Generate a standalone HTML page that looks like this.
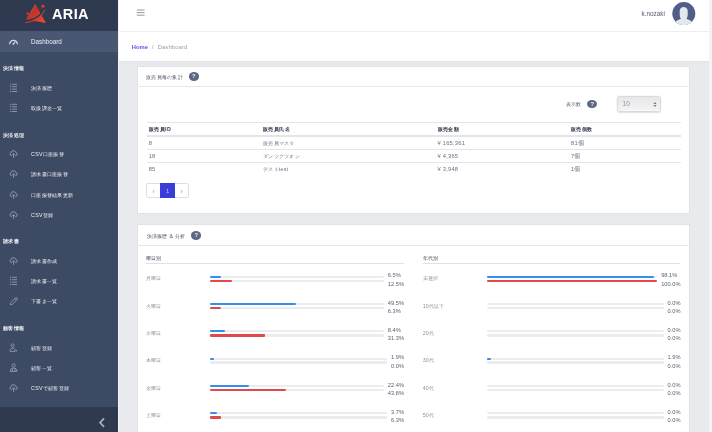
<!DOCTYPE html><html><head><meta charset="utf-8"><style>*{box-sizing:border-box;margin:0;padding:0}
html,body{width:712px;height:432px;overflow:hidden;background:#e9eaee;font-family:"Liberation Sans",sans-serif}
body{will-change:transform}
.a{position:absolute;white-space:nowrap}
#side{position:absolute;left:0;top:0;width:118px;height:432px;background:#3d4a64}
#logo{position:absolute;left:0;top:0;width:118px;height:31px;background:#2f3a51}
.logo-t{left:52px;top:3.5px;font-size:14.5px;line-height:20px;font-weight:bold;color:#fff;letter-spacing:0.35px}
#act{position:absolute;left:0;top:31px;width:118px;height:21px;background:#4a5772}
#bot{position:absolute;left:0;top:407px;width:118px;height:25px;background:#2f3a51}
.si{position:absolute;left:31px;height:12px;line-height:12px;font-size:5.3px;letter-spacing:0.3px;color:#eceef3;white-space:nowrap}
.dash{font-size:6.3px;letter-spacing:0;color:#eef0f4}
.ss{position:absolute;left:2.5px;height:12px;line-height:12px;letter-spacing:0.5px;font-size:5.3px;font-weight:bold;color:#e6e9ee;white-space:nowrap}
.ic{position:absolute;left:9px}
#hdr{position:absolute;left:119px;top:0;width:590px;height:32px;background:#fff;border-bottom:1px solid #eceef1}
#bc{position:absolute;left:119px;top:32px;width:590px;height:30px;background:#fff;border-bottom:1px solid #e0e2e7}
#sb{position:absolute;left:709px;top:0;width:3px;height:432px;background:#f4f4f6}
#wl{position:absolute;left:118px;top:0;width:1px;height:432px;background:#f3f4f6}
.unm{left:641.5px;top:8px;font-size:6.4px;line-height:12px;color:#5a6074}
.bch{left:131.75px;top:41px;font-size:6.1px;line-height:12px}
.home{color:#6252f0;font-weight:bold;font-size:5.8px}
.sep{color:#a0a4ae;margin:0 4px}
.bcd{color:#9ea2ad}
.card{position:absolute;left:137px;width:552.5px;background:#fff;border:1px solid #e0e2e7}
.hb{height:1px;background:#e6e8ec}
.ct{font-size:5.3px;line-height:12px;color:#4a5066;letter-spacing:0.3px}
.ct2{font-size:5.3px;line-height:12px;color:#5a6070}
.ct3{font-size:5.3px;line-height:12px;color:#3f4558;letter-spacing:0.2px}
.q{position:absolute;width:10.4px;height:8.8px;border-radius:50%;background:#5c6784;color:#f4f5f8;font-size:5.8px;font-weight:bold;text-align:center;line-height:8.8px}
.sel{width:44.3px;height:15.5px;border:1px solid #d9dadd;border-radius:2.5px;background:linear-gradient(#e8e8ea,#f1f1f2 80%,#f8f8f9);box-shadow:0 0.5px 1.5px rgba(0,0,0,.13)}
.selv{position:absolute;left:5px;top:2.2px;font-size:6.5px;line-height:10px;color:#8f94a0}
.th{font-size:5.3px;line-height:12px;color:#3a4055;font-weight:bold;letter-spacing:0.45px}
.td{font-size:5.3px;line-height:12px;color:#6b7080;letter-spacing:0.25px}
.tdn{font-size:5.8px;letter-spacing:0.2px}
.hl{position:absolute;left:146.5px;width:534px;height:1px;background:#e4e6eb}
.pg{width:43px;height:15.2px;border:1px solid #dcdfe5;border-radius:2px;background:#fff}
.pga{position:absolute;left:12.9px;top:-1px;width:15px;height:15.2px;background:#3b3dd8;color:#c4c5f4;font-size:6px;text-align:center;line-height:17px}
.pgp{position:absolute;left:5.3px;top:1px;font-size:6.5px;line-height:13px;color:#8d92a0}
.pgn{position:absolute;left:33.3px;top:1px;font-size:6.5px;line-height:13px;color:#8d92a0}
.lab{font-size:5.3px;line-height:12px;color:#8d92a0}
.pc{font-size:5.7px;line-height:12px;color:#5d6273}
.trk{position:absolute;height:2px;background:#ebecef;border-radius:1px}
.bl{position:absolute;height:2px;background:#3390f0;border-radius:1px}
.rd{position:absolute;height:2.5px;background:#e14a4c;border-radius:1px}
</style></head><body>
<div id="side">
<div id="logo">
<svg class="a" style="left:22px;top:0" width="28" height="28" viewBox="22 0 28 28">
<defs><linearGradient id="lg" x1="26" y1="5" x2="44" y2="22" gradientUnits="userSpaceOnUse"><stop offset="0" stop-color="#c7402f"/><stop offset="0.45" stop-color="#c1342a"/><stop offset="1" stop-color="#ec4a32"/></linearGradient></defs>
<polygon points="35.4,4.0 26.0,19.6 45.9,22.9" fill="url(#lg)"/>
<path d="M35.4,4.3 L27.5,17.5" stroke="#e0725c" stroke-width="0.5" opacity="0.6"/>
<path d="M24.8,21.2 C31,20.6 39.5,17.6 43.9,9.4" stroke="#2f3a51" stroke-width="1.5" fill="none"/>
<path d="M25.3,22.6 C31.5,22 40.5,19.5 44.9,9.6" stroke="#de3f2c" stroke-width="1.0" fill="none"/>
<circle cx="42.9" cy="6.2" r="1.65" fill="#d83a2a"/>
<circle cx="27.6" cy="13.4" r="1.25" fill="#d2392a"/>
</svg>
<div class="a logo-t">ARIA</div>
</div>
<div id="act"></div>
<div id="bot"><svg class="a" style="left:97px;top:9px" width="10" height="13" viewBox="0 0 10 13"><path d="M6.6,2.8 L3,6.6 L6.6,10.4" stroke="#a9afbd" stroke-width="1.7" fill="none" stroke-linecap="round" stroke-linejoin="round"/></svg></div>
<div class="si dash" style="top:35.5px">Dashboard</div>
<svg class="ic" style="top:36.5px" width="10" height="10" viewBox="0 0 10 10"><path d="M0.6,7.3 A3.9,3.9 0 1 1 8.4,7.3" stroke="#d5d9e1" stroke-width="1.25" fill="none"/><path d="M4.4,6.9 L6.5,4.5" stroke="#d5d9e1" stroke-width="1.1"/><circle cx="4.4" cy="6.9" r="0.9" fill="#d5d9e1"/></svg>
<div class="ss" style="top:62px">決済情報</div>
<div class="si" style="top:81.5px">決済履歴</div>
<svg class="ic" style="top:82.5px" width="10" height="10" viewBox="0 0 10 10"><path d="M0.9,1.3h1.4 M0.9,3.7h1.4 M0.9,6.1h1.4 M0.9,8.5h1.4 M3.1,1.3h4.9 M3.1,3.7h4.9 M3.1,6.1h4.9 M3.1,8.5h4.9" stroke="#99a1b1" stroke-width="0.85"/></svg>
<div class="si" style="top:102px">取扱課金一覧</div>
<svg class="ic" style="top:103px" width="10" height="10" viewBox="0 0 10 10"><path d="M0.9,1.3h1.4 M0.9,3.7h1.4 M0.9,6.1h1.4 M0.9,8.5h1.4 M3.1,1.3h4.9 M3.1,3.7h4.9 M3.1,6.1h4.9 M3.1,8.5h4.9" stroke="#99a1b1" stroke-width="0.85"/></svg>
<div class="ss" style="top:128.5px">決済処理</div>
<div class="si" style="top:148px">CSV口座振替</div>
<svg class="ic" style="top:149px" width="10" height="10" viewBox="0 0 10 10"><path d="M3,6.6 H2.4 A1.5,1.5 0 0 1 2.1,3.7 A2.3,2.3 0 0 1 6.6,3.3 A1.7,1.7 0 0 1 7,6.6 H6.2" stroke="#9da5b4" stroke-width="0.85" fill="none"/><path d="M4.6,8.9 V4.7 M3.4,5.9 L4.6,4.7 L5.8,5.9" stroke="#9da5b4" stroke-width="0.85" fill="none"/></svg>
<div class="si" style="top:168px">請求書口座振替</div>
<svg class="ic" style="top:169px" width="10" height="10" viewBox="0 0 10 10"><path d="M3,6.6 H2.4 A1.5,1.5 0 0 1 2.1,3.7 A2.3,2.3 0 0 1 6.6,3.3 A1.7,1.7 0 0 1 7,6.6 H6.2" stroke="#9da5b4" stroke-width="0.85" fill="none"/><path d="M4.6,8.9 V4.7 M3.4,5.9 L4.6,4.7 L5.8,5.9" stroke="#9da5b4" stroke-width="0.85" fill="none"/></svg>
<div class="si" style="top:188.5px">口座振替結果更新</div>
<svg class="ic" style="top:189.5px" width="10" height="10" viewBox="0 0 10 10"><path d="M3,6.6 H2.4 A1.5,1.5 0 0 1 2.1,3.7 A2.3,2.3 0 0 1 6.6,3.3 A1.7,1.7 0 0 1 7,6.6 H6.2" stroke="#9da5b4" stroke-width="0.85" fill="none"/><path d="M4.6,8.9 V4.7 M3.4,5.9 L4.6,4.7 L5.8,5.9" stroke="#9da5b4" stroke-width="0.85" fill="none"/></svg>
<div class="si" style="top:208.5px">CSV登録</div>
<svg class="ic" style="top:209.5px" width="10" height="10" viewBox="0 0 10 10"><path d="M3,6.6 H2.4 A1.5,1.5 0 0 1 2.1,3.7 A2.3,2.3 0 0 1 6.6,3.3 A1.7,1.7 0 0 1 7,6.6 H6.2" stroke="#9da5b4" stroke-width="0.85" fill="none"/><path d="M4.6,8.9 V4.7 M3.4,5.9 L4.6,4.7 L5.8,5.9" stroke="#9da5b4" stroke-width="0.85" fill="none"/></svg>
<div class="ss" style="top:235.25px">請求書</div>
<div class="si" style="top:255px">請求書作成</div>
<svg class="ic" style="top:256px" width="10" height="10" viewBox="0 0 10 10"><path d="M3,6.6 H2.4 A1.5,1.5 0 0 1 2.1,3.7 A2.3,2.3 0 0 1 6.6,3.3 A1.7,1.7 0 0 1 7,6.6 H6.2" stroke="#9da5b4" stroke-width="0.85" fill="none"/><path d="M4.6,8.9 V4.7 M3.4,5.9 L4.6,4.7 L5.8,5.9" stroke="#9da5b4" stroke-width="0.85" fill="none"/></svg>
<div class="si" style="top:275.25px">請求書一覧</div>
<svg class="ic" style="top:276.25px" width="10" height="10" viewBox="0 0 10 10"><path d="M0.9,1.3h1.4 M0.9,3.7h1.4 M0.9,6.1h1.4 M0.9,8.5h1.4 M3.1,1.3h4.9 M3.1,3.7h4.9 M3.1,6.1h4.9 M3.1,8.5h4.9" stroke="#99a1b1" stroke-width="0.85"/></svg>
<div class="si" style="top:295.25px">下書き一覧</div>
<svg class="ic" style="top:296.25px" width="10" height="10" viewBox="0 0 10 10"><path d="M1.3,8.7 L1.7,6.7 L6.3,2.1 Q7.3,1.1 8.2,2 Q9,2.9 8,3.8 L3.3,8.4 Z M5.6,2.8 L7.4,4.5" stroke="#9da5b4" stroke-width="0.8" fill="none"/></svg>
<div class="ss" style="top:321.5px">顧客情報</div>
<div class="si" style="top:341.75px">顧客登録</div>
<svg class="ic" style="top:342.75px" width="10" height="10" viewBox="0 0 10 10"><circle cx="3.6" cy="2.4" r="1.55" stroke="#9da5b4" stroke-width="0.8" fill="none"/><path d="M1.2,8.4 V7.4 C1.2,5.8 2.3,5.1 3.6,5.1 C4.9,5.1 6,5.8 6,7.4 V8.4 Z" stroke="#9da5b4" stroke-width="0.8" fill="none"/><circle cx="7.3" cy="7.7" r="0.75" fill="#9da5b4"/></svg>
<div class="si" style="top:362px">顧客一覧</div>
<svg class="ic" style="top:363px" width="10" height="10" viewBox="0 0 10 10"><circle cx="4.6" cy="2.4" r="1.6" stroke="#9da5b4" stroke-width="0.8" fill="none"/><path d="M1.2,8.4 C1.2,6 2.6,5.1 4.6,5.1 C6.6,5.1 8,6 8,8.4 Z M3.3,5.4 V8.4 M5.9,5.4 V8.4" stroke="#9da5b4" stroke-width="0.8" fill="none"/></svg>
<div class="si" style="top:382px">CSVで顧客登録</div>
<svg class="ic" style="top:383px" width="10" height="10" viewBox="0 0 10 10"><path d="M3,6.6 H2.4 A1.5,1.5 0 0 1 2.1,3.7 A2.3,2.3 0 0 1 6.6,3.3 A1.7,1.7 0 0 1 7,6.6 H6.2" stroke="#9da5b4" stroke-width="0.85" fill="none"/><path d="M4.6,8.9 V4.7 M3.4,5.9 L4.6,4.7 L5.8,5.9" stroke="#9da5b4" stroke-width="0.85" fill="none"/></svg>
</div>
<div id="wl"></div><div id="hdr"></div><div id="bc"></div><div id="sb"></div>
<svg class="a" style="left:136px;top:9px" width="10" height="8" viewBox="0 0 10 8"><path d="M0.8,1h7.8 M0.8,3.6h7.8 M0.8,6.2h7.8" stroke="#8b8f99" stroke-width="0.9"/></svg>
<div class="a unm">k.nozaki</div>
<svg class="a" style="left:672px;top:1.5px" width="24" height="24" viewBox="0 0 24 24">
<defs><clipPath id="avc"><circle cx="11.8" cy="11.6" r="11.5"/></clipPath></defs>
<circle cx="11.8" cy="11.6" r="11.5" fill="#515e87"/>
<g clip-path="url(#avc)"><path fill="#e4e8ec" d="M7.7,9 C7.7,3.5 15.7,3.5 15.7,9 L15.7,12.4 C15.7,14.6 15,15.9 14.3,16.8 C16.9,17.6 19.7,19 21.6,21.3 L21.6,26 L2,26 L2,21.3 C3.9,19 6.6,17.6 9.1,16.8 C8.4,15.9 7.7,14.6 7.7,12.4 Z"/></g>
</svg>
<div class="a bch"><span class="home">Home</span><span class="sep">/</span><span class="bcd">Dashboard</span></div>
<div class="card" style="top:66px;height:148px"></div>
<div class="a hb" style="left:137px;top:86px;width:552.5px"></div>
<div class="a ct" style="left:146px;top:71px">販売員毎の集計</div>
<div class="q" style="left:188.6px;top:72.1px">?</div>
<div class="a ct2" style="left:565.7px;top:98px">表示数</div>
<div class="q" style="left:587.1px;top:99.6px">?</div>
<div class="a sel" style="left:616.6px;top:96.3px"><span class="selv">10</span><svg class="a" style="left:35.6px;top:3.8px" width="4" height="7" viewBox="0 0 4 7"><path d="M0.5,3 L2,1 L3.5,3 Z M0.5,4 L2,6 L3.5,4 Z" fill="#777"/></svg></div>
<div class="hl" style="top:122px"></div>
<div class="hl" style="top:134.8px;height:1.8px;background:#e3e5ea"></div>
<div class="hl" style="top:149px"></div>
<div class="hl" style="top:162px"></div>
<div class="a th" style="left:148.7px;top:123px">販売員ID</div>
<div class="a th" style="left:263px;top:123px">販売員氏名</div>
<div class="a th" style="left:437.5px;top:123px">販売金額</div>
<div class="a th" style="left:571px;top:123px">販売個数</div>
<div class="a td tdn" style="left:148.7px;top:136.75px">8</div>
<div class="a td" style="left:263px;top:136.75px">販売員マスタ</div>
<div class="a td tdn" style="left:437.5px;top:136.75px">¥ 165,361</div>
<div class="a td tdn" style="left:571px;top:136.75px">81個</div>
<div class="a td tdn" style="left:148.7px;top:150px">18</div>
<div class="a td" style="left:263px;top:150px">ダンツクツオン</div>
<div class="a td tdn" style="left:437.5px;top:150px">¥ 4,365</div>
<div class="a td tdn" style="left:571px;top:150px">7個</div>
<div class="a td tdn" style="left:148.7px;top:163.25px">85</div>
<div class="a td" style="left:263px;top:163.25px">テストtest</div>
<div class="a td tdn" style="left:437.5px;top:163.25px">¥ 3,948</div>
<div class="a td tdn" style="left:571px;top:163.25px">1個</div>
<div class="a pg" style="left:146.3px;top:183px"><div class="pga">1</div><span class="pgp">‹</span><span class="pgn">›</span></div>
<div class="card" style="top:224px;height:230px"></div>
<div class="a hb" style="left:137px;top:244.5px;width:552.5px"></div>
<div class="a ct" style="left:146.5px;top:229.5px">決済履歴 &amp; 分析</div>
<div class="q" style="left:191.1px;top:231.4px">?</div>
<div class="a ct3" style="left:146px;top:252.25px">曜日別</div>
<div class="a" style="left:146.2px;top:263px;width:257.8px;height:1px;background:#dfe1e6"></div>
<div class="a ct3" style="left:422.7px;top:252.25px">年代別</div>
<div class="a" style="left:423.2px;top:263px;width:257.3px;height:1px;background:#dfe1e6"></div>
<div class="a lab" style="left:145.7px;top:272.4px">月曜日</div>
<div class="trk" style="left:210.2px;top:275.7px;width:173.94050000000004px"></div>
<div class="trk" style="left:210.2px;top:279.5px;width:173.94050000000004px;height:2.5px"></div>
<div class="bl" style="left:210.2px;top:275.7px;width:11.306132500000004px"></div>
<div class="rd" style="left:210.2px;top:279.5px;width:21.742562500000005px"></div>
<div class="a pc" style="left:387.8405px;top:269.4px">6.5%</div>
<div class="a pc" style="left:387.8405px;top:277.79999999999995px">12.5%</div>
<div class="a lab" style="left:145.7px;top:299.7px">火曜日</div>
<div class="trk" style="left:210.2px;top:303.0px;width:173.94050000000004px"></div>
<div class="trk" style="left:210.2px;top:306.8px;width:173.94050000000004px;height:2.5px"></div>
<div class="bl" style="left:210.2px;top:303.0px;width:86.10054750000003px"></div>
<div class="rd" style="left:210.2px;top:306.8px;width:10.958251500000003px"></div>
<div class="a pc" style="left:387.8405px;top:296.7px">49.5%</div>
<div class="a pc" style="left:387.8405px;top:305.09999999999997px">6.3%</div>
<div class="a lab" style="left:145.7px;top:327.0px">水曜日</div>
<div class="trk" style="left:210.2px;top:330.3px;width:173.94050000000004px"></div>
<div class="trk" style="left:210.2px;top:334.1px;width:173.94050000000004px;height:2.5px"></div>
<div class="bl" style="left:210.2px;top:330.3px;width:14.611002000000003px"></div>
<div class="rd" style="left:210.2px;top:334.1px;width:54.443376500000014px"></div>
<div class="a pc" style="left:387.8405px;top:324.0px">8.4%</div>
<div class="a pc" style="left:387.8405px;top:332.4px">31.3%</div>
<div class="a lab" style="left:145.7px;top:354.29999999999995px">木曜日</div>
<div class="trk" style="left:210.2px;top:357.59999999999997px;width:177.10970000000003px"></div>
<div class="trk" style="left:210.2px;top:361.4px;width:177.10970000000003px;height:2.5px"></div>
<div class="bl" style="left:210.2px;top:357.59999999999997px;width:3.3650843000000004px"></div>
<div class="a pc" style="left:391.0097px;top:351.29999999999995px">1.9%</div>
<div class="a pc" style="left:391.0097px;top:359.69999999999993px">0.0%</div>
<div class="a lab" style="left:145.7px;top:381.59999999999997px">金曜日</div>
<div class="trk" style="left:210.2px;top:384.9px;width:173.94050000000004px"></div>
<div class="trk" style="left:210.2px;top:388.7px;width:173.94050000000004px;height:2.5px"></div>
<div class="bl" style="left:210.2px;top:384.9px;width:38.962672000000005px"></div>
<div class="rd" style="left:210.2px;top:388.7px;width:76.18593900000002px"></div>
<div class="a pc" style="left:387.8405px;top:378.59999999999997px">22.4%</div>
<div class="a pc" style="left:387.8405px;top:386.99999999999994px">43.8%</div>
<div class="a lab" style="left:145.7px;top:408.9px">土曜日</div>
<div class="trk" style="left:210.2px;top:412.2px;width:177.10970000000003px"></div>
<div class="trk" style="left:210.2px;top:416.0px;width:177.10970000000003px;height:2.5px"></div>
<div class="bl" style="left:210.2px;top:412.2px;width:6.553058900000002px"></div>
<div class="rd" style="left:210.2px;top:416.0px;width:11.157911100000002px"></div>
<div class="a pc" style="left:391.0097px;top:405.9px">3.7%</div>
<div class="a pc" style="left:391.0097px;top:414.29999999999995px">6.3%</div>
<div class="a lab" style="left:422.7px;top:272.4px">未選択</div>
<div class="trk" style="left:487.2px;top:275.7px;width:170.27129999999994px"></div>
<div class="trk" style="left:487.2px;top:279.5px;width:170.27129999999994px;height:2.5px"></div>
<div class="bl" style="left:487.2px;top:275.7px;width:167.03614529999993px"></div>
<div class="rd" style="left:487.2px;top:279.5px;width:170.27129999999994px"></div>
<div class="a pc" style="left:661.1713px;top:269.4px">98.1%</div>
<div class="a pc" style="left:661.1713px;top:277.79999999999995px">100.0%</div>
<div class="a lab" style="left:422.7px;top:299.7px">10代以下</div>
<div class="trk" style="left:487.2px;top:303.0px;width:176.60969999999992px"></div>
<div class="trk" style="left:487.2px;top:306.8px;width:176.60969999999992px;height:2.5px"></div>
<div class="a pc" style="left:667.5097px;top:296.7px">0.0%</div>
<div class="a pc" style="left:667.5097px;top:305.09999999999997px">0.0%</div>
<div class="a lab" style="left:422.7px;top:327.0px">20代</div>
<div class="trk" style="left:487.2px;top:330.3px;width:176.60969999999992px"></div>
<div class="trk" style="left:487.2px;top:334.1px;width:176.60969999999992px;height:2.5px"></div>
<div class="a pc" style="left:667.5097px;top:324.0px">0.0%</div>
<div class="a pc" style="left:667.5097px;top:332.4px">0.0%</div>
<div class="a lab" style="left:422.7px;top:354.29999999999995px">30代</div>
<div class="trk" style="left:487.2px;top:357.59999999999997px;width:176.60969999999992px"></div>
<div class="trk" style="left:487.2px;top:361.4px;width:176.60969999999992px;height:2.5px"></div>
<div class="bl" style="left:487.2px;top:357.59999999999997px;width:3.355584299999998px"></div>
<div class="a pc" style="left:667.5097px;top:351.29999999999995px">1.9%</div>
<div class="a pc" style="left:667.5097px;top:359.69999999999993px">0.0%</div>
<div class="a lab" style="left:422.7px;top:381.59999999999997px">40代</div>
<div class="trk" style="left:487.2px;top:384.9px;width:176.60969999999992px"></div>
<div class="trk" style="left:487.2px;top:388.7px;width:176.60969999999992px;height:2.5px"></div>
<div class="a pc" style="left:667.5097px;top:378.59999999999997px">0.0%</div>
<div class="a pc" style="left:667.5097px;top:386.99999999999994px">0.0%</div>
<div class="a lab" style="left:422.7px;top:408.9px">50代</div>
<div class="trk" style="left:487.2px;top:412.2px;width:176.60969999999992px"></div>
<div class="trk" style="left:487.2px;top:416.0px;width:176.60969999999992px;height:2.5px"></div>
<div class="a pc" style="left:667.5097px;top:405.9px">0.0%</div>
<div class="a pc" style="left:667.5097px;top:414.29999999999995px">0.0%</div>
</body></html>
